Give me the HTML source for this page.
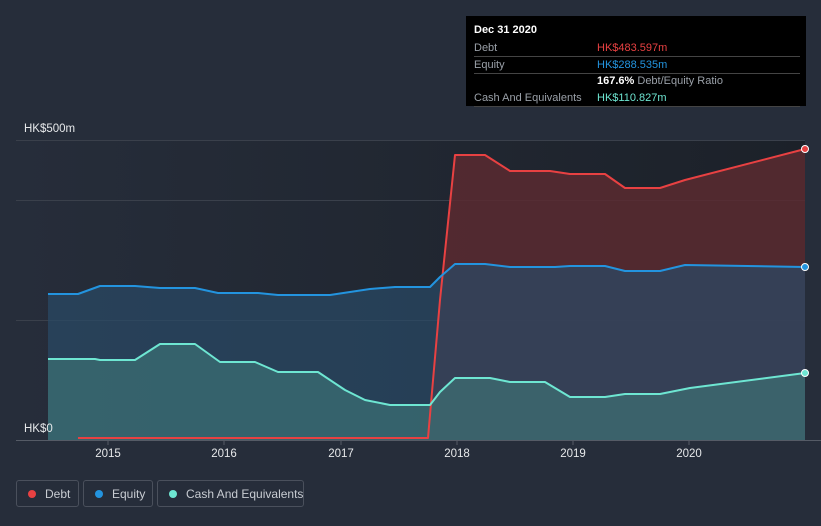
<!DOCTYPE html>
<html><head><style>
body{margin:0;background:#262d3a;font-family:"Liberation Sans",sans-serif;}
.wrap{position:relative;width:821px;height:526px;overflow:hidden;}
.tip{position:absolute;left:466px;top:16px;width:340px;height:90px;background:#000;color:#fff;font-size:11px;}
.tip .r{position:absolute;left:8px;right:6px;height:16px;line-height:16px;border-bottom:1px solid #444;white-space:nowrap}
.tip .l{color:#9aa0a8}
.tip .v{position:absolute;left:123px;top:0}
.leg{position:absolute;top:480px;height:27px;border:1px solid #4a505c;border-radius:3px;color:#c8ccd2;font-size:12px;line-height:26px;box-sizing:border-box;white-space:nowrap}
.leg i{position:absolute;left:11px;top:9px;width:8px;height:8px;border-radius:50%}
.leg span{position:absolute;left:28px;top:0}
</style></head><body><div class="wrap">
<svg width="821" height="526" style="position:absolute;left:0;top:0">
<defs><linearGradient id="bg" x1="0" x2="1"><stop offset="0" stop-color="#262d3a"/><stop offset="1" stop-color="#1c2129"/></linearGradient></defs>
<rect x="16" y="140" width="789" height="300" fill="url(#bg)"/>
<g stroke="#3a404b" stroke-width="1">
<line x1="16" y1="140.5" x2="805" y2="140.5"/><line x1="16" y1="200.5" x2="805" y2="200.5"/><line x1="16" y1="320.5" x2="805" y2="320.5"/>
</g>
<path d="M78,438 L428,438 L440,300 L455,155 L485,155 L510,171 L550,171 L570,174 L605,174 L625,188 L660,188 L685,180 L805,149 L805,440 L78,440Z" fill="#5a2a30" opacity="0.85"/>
<path d="M48,294 L78,294 L100,286 L135,286 L160,288 L195,288 L218,293 L258,293 L278,295 L330,295 L370,289 L395,287 L430,287 L440,277 L455,264 L485,264 L510,267 L555,267 L570,266 L605,266 L625,271 L660,271 L685,265 L805,267 L805,440 L48,440Z" fill="#2a4a66" opacity="0.7"/>
<path d="M48,359 L95,359 L100,360 L135,360 L160,344 L195,344 L220,362 L255,362 L278,372 L318,372 L345,390 L365,400 L390,405 L430,405 L440,392 L455,378 L490,378 L510,382 L545,382 L570,397 L605,397 L625,394 L660,394 L690,388 L805,373 L805,440 L48,440Z" fill="#3f7a7a" opacity="0.6"/>
<path d="M78,438 L428,438 L440,300 L455,155 L485,155 L510,171 L550,171 L570,174 L605,174 L625,188 L660,188 L685,180 L805,149" fill="none" stroke="#e84142" stroke-width="2" stroke-linejoin="round"/>
<path d="M48,294 L78,294 L100,286 L135,286 L160,288 L195,288 L218,293 L258,293 L278,295 L330,295 L370,289 L395,287 L430,287 L440,277 L455,264 L485,264 L510,267 L555,267 L570,266 L605,266 L625,271 L660,271 L685,265 L805,267" fill="none" stroke="#2394df" stroke-width="2" stroke-linejoin="round"/>
<path d="M48,359 L95,359 L100,360 L135,360 L160,344 L195,344 L220,362 L255,362 L278,372 L318,372 L345,390 L365,400 L390,405 L430,405 L440,392 L455,378 L490,378 L510,382 L545,382 L570,397 L605,397 L625,394 L660,394 L690,388 L805,373" fill="none" stroke="#6ee6d2" stroke-width="2" stroke-linejoin="round"/>
<circle cx="805" cy="149" r="3.5" fill="#e84142" stroke="#fff" stroke-width="1"/>
<circle cx="805" cy="267" r="3.5" fill="#2394df" stroke="#fff" stroke-width="1"/>
<circle cx="805" cy="373" r="3.5" fill="#6ee6d2" stroke="#fff" stroke-width="1"/>
<line x1="16" y1="440.5" x2="821" y2="440.5" stroke="#555b66"/>
<g stroke="#555b66"><line x1="108" y1="441" x2="108" y2="445"/><line x1="224" y1="441" x2="224" y2="445"/><line x1="341" y1="441" x2="341" y2="445"/><line x1="457" y1="441" x2="457" y2="445"/><line x1="573" y1="441" x2="573" y2="445"/><line x1="689" y1="441" x2="689" y2="445"/></g>
<g fill="#e6e8ea" font-size="11.5" text-anchor="middle" font-family="Liberation Sans,sans-serif">
<text x="108" y="457">2015</text><text x="224" y="457">2016</text><text x="341" y="457">2017</text><text x="457" y="457">2018</text><text x="573" y="457">2019</text><text x="689" y="457">2020</text>
<text x="24" y="132" text-anchor="start">HK$500m</text><text x="24" y="432" text-anchor="start">HK$0</text>
</g>
</svg>
<div class="tip">
<div style="position:absolute;left:8px;top:8px;font-weight:bold">Dec 31 2020</div>
<div class="r" style="top:24px"><span class="l">Debt</span><span class="v" style="color:#e84142">HK$483.597m</span></div>
<div class="r" style="top:41px"><span class="l">Equity</span><span class="v" style="color:#2394df">HK$288.535m</span></div>
<div class="r" style="top:57px;border:none"><span class="v"><b>167.6%</b> <span class="l">Debt/Equity Ratio</span></span></div>
<div class="r" style="top:74px"><span class="l">Cash And Equivalents</span><span class="v" style="color:#6ee6d2">HK$110.827m</span></div>
</div>
<div class="leg" style="left:16px;width:63px"><i style="background:#e84142"></i><span>Debt</span></div>
<div class="leg" style="left:83px;width:70px"><i style="background:#2394df"></i><span>Equity</span></div>
<div class="leg" style="left:157px;width:147px"><i style="background:#6ee6d2"></i><span>Cash And Equivalents</span></div>
</div></body></html>
